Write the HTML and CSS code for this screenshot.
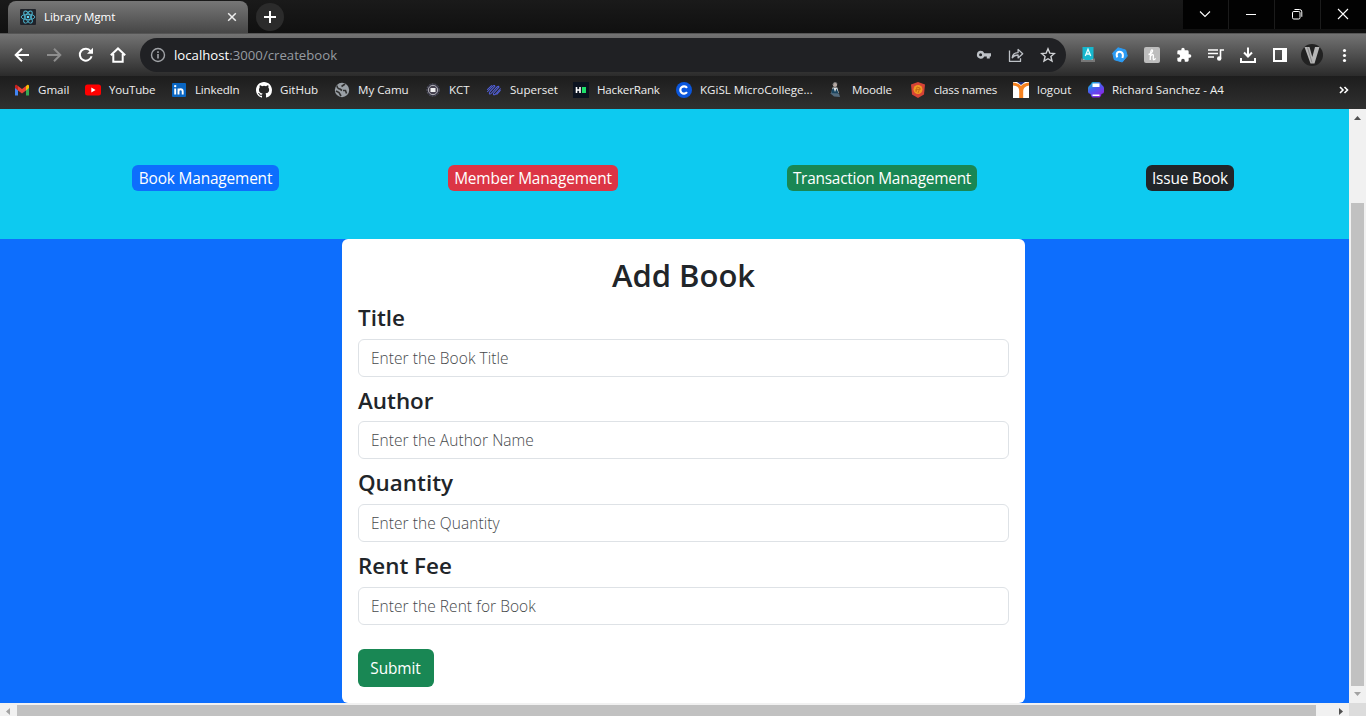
FILE: index.html
```
<!DOCTYPE html>
<html lang="en">
<head>
<meta charset="utf-8">
<title>Library Mgmt</title>
<link rel="stylesheet" href="styles.css">
</head>
<body>
<div class="browser">
  <header class="tabstrip">
    <div class="tab">
      <svg class="ic16" viewBox="0 0 16 16"><rect width="16" height="16" rx="1" fill="#20232a"/><g fill="none" stroke="#4fb8d3" stroke-width=".9"><ellipse cx="8" cy="8" rx="6.8" ry="2.7"/><ellipse cx="8" cy="8" rx="6.8" ry="2.7" transform="rotate(60 8 8)"/><ellipse cx="8" cy="8" rx="6.8" ry="2.7" transform="rotate(120 8 8)"/></g><circle cx="8" cy="8" r="1.3" fill="#61dafb"/></svg>
      <span class="tab-title">Library Mgmt</span>
      <svg class="tab-close" width="10" height="10" viewBox="0 0 10 10"><path d="M1.2 1.2l7.6 7.6M8.800 1.200L1.200 8.800" stroke="#eee" stroke-width="1.500"/></svg>
    </div>
    <div class="newtab"><svg width="14" height="14" viewBox="0 0 14 14"><path d="M7 1v12M1 7h12" stroke="#fff" stroke-width="2"/></svg></div>
    <div class="winbtns">
      <div class="winbtn"><svg width="12" height="12" viewBox="0 0 12 12"><path d="M1 3.500l5 5 5-5" fill="none" stroke="#fff" stroke-width="1.100"/></svg></div>
      <div class="winbtn"><svg width="12" height="12" viewBox="0 0 12 12"><path d="M1 6.500h10" stroke="#fff"/></svg></div>
      <div class="winbtn"><svg width="12" height="12" viewBox="0 0 12 12"><rect x="1.500" y="3.500" width="7.500" height="7.500" rx="1.300" fill="none" stroke="#fff"/><path d="M3.500 1.500h5a2.300 2.300 0 0 1 2.300 2.300v5" fill="none" stroke="#fff"/></svg></div>
      <div class="winbtn"><svg width="12" height="12" viewBox="0 0 12 12"><path d="M1 1l10 10M11 1L1 11" stroke="#fff" stroke-width="1.100"/></svg></div>
    </div>
  </header>

  <div class="toolbar">
    <div class="navicons">
      <svg class="ic16" viewBox="0 0 16 16"><path d="M15 8H2M8 1.700L1.700 8 8 14.300" fill="none" stroke="#fff" stroke-width="2"/></svg>
      <svg class="ic16" viewBox="0 0 16 16"><path d="M1 8h13M8 1.700L14.300 8 8 14.300" fill="none" stroke="#8d8d8d" stroke-width="2"/></svg>
      <svg class="ic16" viewBox="0 0 16 16"><path d="M13.600 9.300A6 6 0 1 1 12.600 4" fill="none" stroke="#fff" stroke-width="2"/><path d="M15 .8v6H9z" fill="#fff"/></svg>
      <svg class="ic16" viewBox="0 0 16 16"><path d="M.8 8.200L8 1.400l7.200 6.800M3.300 7v7.800h9.400V7" fill="none" stroke="#fff" stroke-width="2"/></svg>
    </div>
    <div class="omnibox">
      <svg class="ic16" viewBox="0 0 16 16"><circle cx="8" cy="8" r="6.500" fill="none" stroke="#a0a3a7" stroke-width="1.400"/><path d="M8 7v4.600M8 4.200v1.700" stroke="#a0a3a7" stroke-width="1.600"/></svg>
      <span class="url"><b>localhost</b>:3000/createbook</span>
      <div class="omni-actions">
        <svg class="ic16" viewBox="0 0 16 16"><path fill="#bdc1c6" fill-rule="evenodd" d="M4.600 3.800A3.900 3.900 0 0 1 8.300 6.200H15v3.200h-1.200v2.100h-3V9.400H8.300A3.900 3.900 0 1 1 4.600 3.800zm0 2.500a1.500 1.500 0 1 0 0 3 1.500 1.500 0 0 0 0-3z"/></svg>
        <svg class="ic16" viewBox="0 0 16 16"><path d="M1.500 3.600v10.800h11v-3.200M4.200 10.800c.3-3.300 2.300-5.200 5.900-5.200V2.400l4.600 4.300-4.600 4.200V8c-2.800 0-4.600.8-5.900 2.800z" fill="none" stroke="#bdc1c6" stroke-width="1.300" stroke-linejoin="round"/></svg>
        <svg class="ic16" viewBox="0 0 16 16"><path d="M8 1.800l1.800 4.300 4.600.4-3.500 3 1.100 4.600L8 11.700l-4 2.400 1.100-4.600-3.500-3 4.600-.4z" fill="none" stroke="#d0d2d5" stroke-width="1.400"/></svg>
      </div>
    </div>
    <div class="extensions">
      <svg class="ic16" viewBox="0 0 16 16"><path d="M1 11.500h14v3.500H1z" fill="#777"/><path d="M3 9h10v4H3z" fill="#aaa"/><path d="M2.500 0h11v11.500l-3 1.500h-5l-3-1.500z" fill="#16b7ce"/><path d="M5.300 9L8 2.300 10.700 9M6.300 7h3.400" fill="none" stroke="#e8ffff" stroke-width="1.300"/></svg>
      <svg class="ic16" viewBox="0 0 16 16"><path d="M6 .8l7.600 2.200L15.300 9l-5 6-8-2.300L.7 6z" fill="#2c9cf4" stroke="#2c9cf4" stroke-linejoin="round"/><path d="M5.200 10.300C3.500 5.500 6.500 4.200 8.800 5c2.300.9 2.600 3 1.600 6" fill="none" stroke="#fff" stroke-width="2"/></svg>
      <svg class="ic16" viewBox="0 0 16 16"><rect width="16" height="16" rx="2" fill="#bdbdbd"/><path d="M4.500 7.500C8.800 6.500 9.300 2.600 7.700 2.800c-1.500.3-1.300 5-1.500 10.200M6.300 9.500c1.200-2.600 3.300-2.600 3.100-.4l-.2 2.500c0 1.800 1.600 1.300 2.300-.3" fill="none" stroke="#fff" stroke-width="1.300"/></svg>
      <svg class="ic16" viewBox="0 0 24 24"><path fill="#fff" d="M20.500 11H19V7a2 2 0 0 0-2-2h-4V3.500a2.500 2.500 0 0 0-5 0V5H4a2 2 0 0 0-2 2v3.800h1.500a2.700 2.700 0 0 1 0 5.400H2V20a2 2 0 0 0 2 2h3.800v-1.500a2.700 2.700 0 0 1 5.400 0V22H17a2 2 0 0 0 2-2v-4h1.500a2.500 2.500 0 0 0 0-5z"/></svg>
      <svg class="ic16" viewBox="0 0 16 16"><path d="M0 3h10M0 6.500h10M0 10h6M12.500 11V3H16" fill="none" stroke="#fff" stroke-width="1.600"/><circle cx="11.200" cy="11.500" r="2.200" fill="#fff"/></svg>
      <svg class="ic16" viewBox="0 0 16 16"><path d="M8 .5v8M4 5.500l4 4 4-4M1 11v4h14v-4" fill="none" stroke="#fff" stroke-width="2"/></svg>
      <svg class="ic16" viewBox="0 0 16 16"><path fill="#fff" fill-rule="evenodd" d="M1 1h14v14H1zM3 3v10h7V3z"/></svg>
      <svg class="avatar" viewBox="0 0 22 22"><circle cx="11" cy="11" r="11" fill="#222"/><path d="M3.500 3h5l2.800 10L14 3h4.500L13.500 19.500h-4z" fill="#b5b5b5"/><path d="M6.500 3.500l4.500 15" fill="none" stroke="#888"/></svg>
      <svg class="ic16" viewBox="0 0 16 16"><g fill="#fff"><circle cx="8.500" cy="3.500" r="1.600"/><circle cx="8.500" cy="8.500" r="1.600"/><circle cx="8.500" cy="13.500" r="1.600"/></g></svg>
    </div>
  </div>

  <nav class="bookmarks">
    <div class="bm w71"><svg class="ic16" viewBox="0 0 16 16"><path d="M1 4v9.500h3V6z" fill="#4285f4"/><path d="M15 4v9.500h-3V6z" fill="#34a853"/><path d="M12 4l1.500-1.300Q15 2.500 15 4v2l-3 2.500z" fill="#fbbc04"/><path d="M1 4q0-1.500 1.500-1.300L4 4v4.500L1 6z" fill="#c5221f"/><path d="M4 4l4 3 4-3v4.500l-4 3-4-3z" fill="#ea4335"/></svg><span>Gmail</span></div>
    <div class="bm w86"><svg class="ic16" viewBox="0 0 16 16"><rect y="2.500" width="16" height="11" rx="2.500" fill="#f00"/><path d="M6.300 5.500v5l4.300-2.500z" fill="#fff"/></svg><span class="snug">YouTube</span></div>
    <div class="bm w85"><svg class="ic16" viewBox="0 0 16 16"><rect x="1" y="1" width="14" height="14" rx="1" fill="#0a66c2"/><path d="M4.200 6.500v6M7.500 12.500v-6M7.500 9.500c0-3 4.200-3 4.200 0v3" fill="none" stroke="#fff" stroke-width="1.900"/><circle cx="4.200" cy="4.100" r="1.200" fill="#fff"/></svg><span class="snug">LinkedIn</span></div>
    <div class="bm w78"><svg class="ic16" viewBox="0 0 16 16"><path fill="#fff" d="M8 0C3.580 0 0 3.580 0 8c0 3.540 2.290 6.530 5.470 7.590.4.070.55-.17.55-.38v-1.490c-2.010.37-2.530-.49-2.690-.94-.09-.23-.48-.94-.82-1.130-.28-.15-.68-.52-.01-.53.63-.01 1.080.58 1.230.82.72 1.210 1.870.87 2.330.66.07-.52.28-.87.51-1.070-1.780-.2-3.640-.89-3.640-3.950 0-.87.31-1.590.82-2.150-.08-.2-.36-1.020.08-2.120 0 0 .67-.21 2.200.82a7.400 7.400 0 0 1 4 0c1.530-1.040 2.200-.82 2.200-.82.44 1.100.16 1.920.08 2.120.51.56.82 1.270.82 2.150 0 3.070-1.870 3.750-3.650 3.950.29.25.54.73.54 1.480v2.200c0 .21.15.46.55.38A8 8 0 0 0 16 8c0-4.420-3.580-8-8-8z"/></svg><span>GitHub</span></div>
    <div class="bm w91"><svg class="ic16" viewBox="0 0 16 16"><circle cx="8" cy="8" r="7.200" fill="#9aa0a6"/><path d="M3 3.500c0 2 1.500 3.500 3 3.500l2 1.500M11 2L7.500 4.500M2 9l3 1.500 2 3.500M9 8.500h2.500l1 3" fill="none" stroke="#303030" stroke-width="1.600"/></svg><span>My Camu</span></div>
    <div class="bm w61"><svg class="ic16" viewBox="0 0 16 16"><circle cx="8" cy="8" r="6.200" fill="#2c2c3c" stroke="#565664" stroke-dasharray="2 1"/><circle cx="8" cy="8" r="4.700" fill="#45414f" stroke="#b5b5bb"/><rect x="5.500" y="6" width="5" height="4" fill="#eee"/></svg><span>KCT</span></div>
    <div class="bm w87"><svg class="ic16" viewBox="0 0 16 16"><g fill="none" stroke="#5260dc" stroke-width="1.050"><path d="M1.200 10L7.300 3.700q1.500-.8 1.600.6L4 9.700q-1.200 1.600-.4 2.300 1 .2 2-1L11 5q1.700-1.300 2 0L7.700 11q-.8 1 0 1.800 1 .2 1.800-.7L14.700 6.500"/><path d="M1.200 7.800L5.800 3.300M10.500 12.700l4-4.500"/></g></svg><span>Superset</span></div>
    <div class="bm w103"><svg class="ic16" viewBox="0 0 16 16"><rect width="16" height="16" fill="#0b1320"/><path d="M3.500 5v6M7 5v6M3.500 8H7" stroke="#fff" stroke-width="1.600"/><rect x="9" y="5" width="4" height="6" fill="#1ee06a"/></svg><span class="snug">HackerRank</span></div>
    <div class="bm w152"><svg class="ic16" viewBox="0 0 16 16"><circle cx="8" cy="8" r="8" fill="#0a56dc"/><path d="M11 5.800A3.700 3.700 0 1 0 11 10.200" fill="none" stroke="#fff" stroke-width="2.200"/></svg><span>KGiSL MicroCollege...</span></div>
    <div class="bm w82"><svg class="ic16" viewBox="0 0 16 16"><circle cx="7" cy="2.700" r="2.200" fill="#b6a9a3"/><path d="M5 3q0-2.500 2-2.500T9 1.800" fill="none" stroke="#777"/><path d="M4.500 5.500h4.800l1.500 5.500H3.500z" fill="#dfe3e5"/><path d="M3.500 8l2-2 1.500 4 1.500-3.500 2 4.500-1 2.500-6-1z" fill="#1b4560"/><path d="M2 11l9 .5 1 3.500-6-.5z" fill="#536a7c"/></svg><span class="snug">Moodle</span></div>
    <div class="bm w103"><svg class="ic16" viewBox="0 0 16 16"><path d="M8 0l7 2.500-1 10L8 16l-6-3.500-1-10z" fill="#d64336"/><circle cx="8" cy="7.500" r="4.500" fill="#f09a22"/><path d="M6 10l1-5 3 1-2 5M5 8l6-1" fill="none" stroke="#c96c16"/></svg><span class="snug">class names</span></div>
    <div class="bm w75"><svg class="ic16" viewBox="0 0 16 16"><rect width="16" height="16" fill="#fff"/><path d="M4 0h8L8 3z" fill="#203080"/><path d="M0 .5v3Q6.200 3.500 6.200 9v7h4V9Q10.200 4.500 16 3.500v-3Q10 1 8 4 6 1 0 .5z" fill="#f58220"/></svg><span>logout</span></div>
    <div class="bm"><svg class="ic16" viewBox="0 0 16 16"><defs><linearGradient id="printer" x2=".6" y2="1"><stop offset="0" stop-color="#08cbd0"/><stop offset=".5" stop-color="#4a5af0"/><stop offset="1" stop-color="#8b25e6"/></linearGradient></defs><path d="M5 0h6q1.500 0 2 2l1.500 1.500Q16 4.500 16 6v4q0 1.500-2.500 2-.3 3-2 3.500h-7q-1.700-.5-2-3.500Q0 11.500 0 10V6q0-1.500 1.500-2.500L3 2q.5-2 2-2z" fill="url(#printer)"/><path d="M4.500 1.500h7V5h-7zM4.500 12.500h7V14h-7z" fill="#fff"/></svg><span>Richard Sanchez - A4</span></div>
    <svg class="more" width="10" height="8" viewBox="0 0 10 8"><path d="M1 1l3 3-3 3M5.500 1l3 3-3 3" fill="none" stroke="#fff" stroke-width="1.600"/></svg>
  </nav>

  <div class="viewport">
    <main class="page">
      <div class="links">
        <a class="badge primary">Book Management</a>
        <a class="badge danger">Member Management</a>
        <a class="badge success">Transaction Management</a>
        <a class="badge dark">Issue Book</a>
      </div>
      <div class="form-area">
        <form class="card">
          <h2>Add Book</h2>
          <h4>Title</h4>
          <input placeholder="Enter the Book Title">
          <h4>Author</h4>
          <input placeholder="Enter the Author Name">
          <h4>Quantity</h4>
          <input placeholder="Enter the Quantity">
          <h4>Rent Fee</h4>
          <input placeholder="Enter the Rent for Book">
          <button type="button" class="submit">Submit</button>
        </form>
      </div>
    </main>
    <div class="vscroll">
      <svg width="17" height="17" viewBox="0 0 17 17"><path d="M5 11l3.500-4 3.500 4z" fill="#505050"/></svg>
      <div class="vthumb"></div>
      <svg width="17" height="17" viewBox="0 0 17 17"><path d="M5 6l3.500 4L12 6z" fill="#a3a3a3"/></svg>
    </div>
  </div>
  <div class="hscroll">
    <svg width="17" height="13" viewBox="0 0 17 13"><path d="M10 5l-4 3.500 4 3.500z" fill="#a3a3a3"/></svg>
    <div class="hthumb"></div>
    <svg width="17" height="13" viewBox="0 0 17 13"><path d="M7 5l4 3.500L7 12z" fill="#505050"/></svg>
    <div class="corner"></div>
  </div>
</div>
</body>
</html>
```
FILE: styles.css
```
* { box-sizing: border-box; }
body { margin: 0; overflow: hidden; font-family: "Open Sans", "Noto Sans", sans-serif; }
svg { display: block; flex: none; }
.ic16 { width: 16px; height: 16px; }
.browser { width: 1366px; height: 716px; display: flex; flex-direction: column; background: #141414; }

.tabstrip { height: 33px; flex: none; display: flex; padding-left: 8px; background: linear-gradient(#1a1a1a, #101010); }
.tab { width: 240px; height: 32px; margin-top: 1px; padding: 0 11px 0 12px; display: flex; align-items: center; border-radius: 8px 8px 0 0; background: linear-gradient(#777, #464646); }
.tab-title { flex: 1; margin: 0 0 2px 8px; color: #fff; font-size: 11.6px; letter-spacing: -0.1px; white-space: nowrap; }
.newtab { width: 28px; height: 28px; margin: 3px 0 0 8px; border-radius: 50%; background: #2b2b2b; display: flex; align-items: center; justify-content: center; }
.winbtns { margin-left: auto; height: 29px; display: flex; gap: 1px; background: #1b1b1b; }
.winbtn { width: 45px; padding: 0 2px 1px 0; background: #020202; display: flex; align-items: center; justify-content: center; }

.toolbar { height: 43px; flex: none; display: flex; align-items: center; padding-left: 14px; border-top: 1px solid #555; background: linear-gradient(#737373, #2b2b2b); }
.navicons { width: 126px; display: flex; gap: 16px; }
.omnibox { width: 926px; height: 34px; padding: 0 10px; border-radius: 17px; background: #202124; display: flex; align-items: center; }
.url { margin-left: 8px; color: #969ba1; font-size: 13.2px; white-space: nowrap; }
.url b { color: #fff; font-weight: 400; }
.omni-actions { display: flex; gap: 16px; margin-left: auto; }
.extensions { display: flex; align-items: center; gap: 16px; margin-left: 14px; }
.avatar { width: 22px; height: 22px; margin: 0 -3px; }

.bookmarks { height: 33px; flex: none; display: flex; align-items: center; padding: 0 17px 5px 14px; background: linear-gradient(#1d1d1d, #303030); }
.bm { display: flex; align-items: center; gap: 8px; flex: none; color: #eee; font-size: 11.6px; white-space: nowrap; }
.bm span { margin-bottom: 2px; letter-spacing: -0.02px; }
.bm .snug { letter-spacing: -0.2px; }
.w61 { width: 61px; }
.w71 { width: 71px; }
.w75 { width: 75px; }
.w78 { width: 78px; }
.w82 { width: 82px; }
.w85 { width: 85px; }
.w86 { width: 86px; }
.w87 { width: 87px; }
.w91 { width: 91px; }
.w103 { width: 103px; }
.w152 { width: 152px; }
.more { margin-left: auto; }

.viewport { height: 594px; flex: none; display: flex; }
.page { width: 1349px; background: #0d6efd; color: #212529; }
.links { height: 130px; padding: 56px 0 0 132px; display: flex; align-items: flex-start; gap: 169px; background: #0dcaf0; }
.badge { height: 26px; border-radius: 6px; color: #fff; font-size: 15.4px; letter-spacing: -0.15px; line-height: 27px; text-align: center; white-space: nowrap; }
.primary { width: 147px; background: #0d6efd; }
.danger { width: 170px; background: #dc3545; }
.success { width: 190px; background: #198754; letter-spacing: -0.23px; }
.dark { width: 88px; background: #212529; }

.form-area { height: 464px; padding-left: 342px; }
.card { width: 683px; height: 464px; padding: 16px; border-radius: 6px; background: #fff; }
h2, h4 { margin: 0; font-weight: 600; }
h2 { height: 46.8px; padding-top: 0.5px; font-size: 31px; line-height: 38.4px; text-align: center; }
h4 { height: 36.8px; padding-top: 2px; font-size: 22.4px; line-height: 28.8px; }
input { display: block; width: 651px; height: 38px; margin: 0 0 8px; padding: 0 12px; border: 1px solid #dee2e6; border-radius: 6px; background: #fff; color: #212529; font: 300 15.5px "Open Sans", sans-serif; letter-spacing: 0.05px; }
input::placeholder { color: #45484b; opacity: 1; }
.submit { width: 76px; height: 38px; margin-top: 16px; padding: 2px 1px 0 0; border: 0; border-radius: 6px; background: #198754; color: #fff; font: 400 15.4px "Open Sans", sans-serif; letter-spacing: -0.1px; }

.vscroll { width: 17px; display: flex; flex-direction: column; align-items: center; background: #f1f1f1; }
.vthumb { width: 13px; height: 483px; margin: auto 0 0; background: #c1c1c1; }
.hscroll { height: 13px; flex: none; display: flex; background: #f1f1f1; }
.hthumb { width: 1299px; height: 11px; margin: 2px 16px 0 0; background: #c1c1c1; }
.corner { width: 17px; background: #dcdcdc; }
```
